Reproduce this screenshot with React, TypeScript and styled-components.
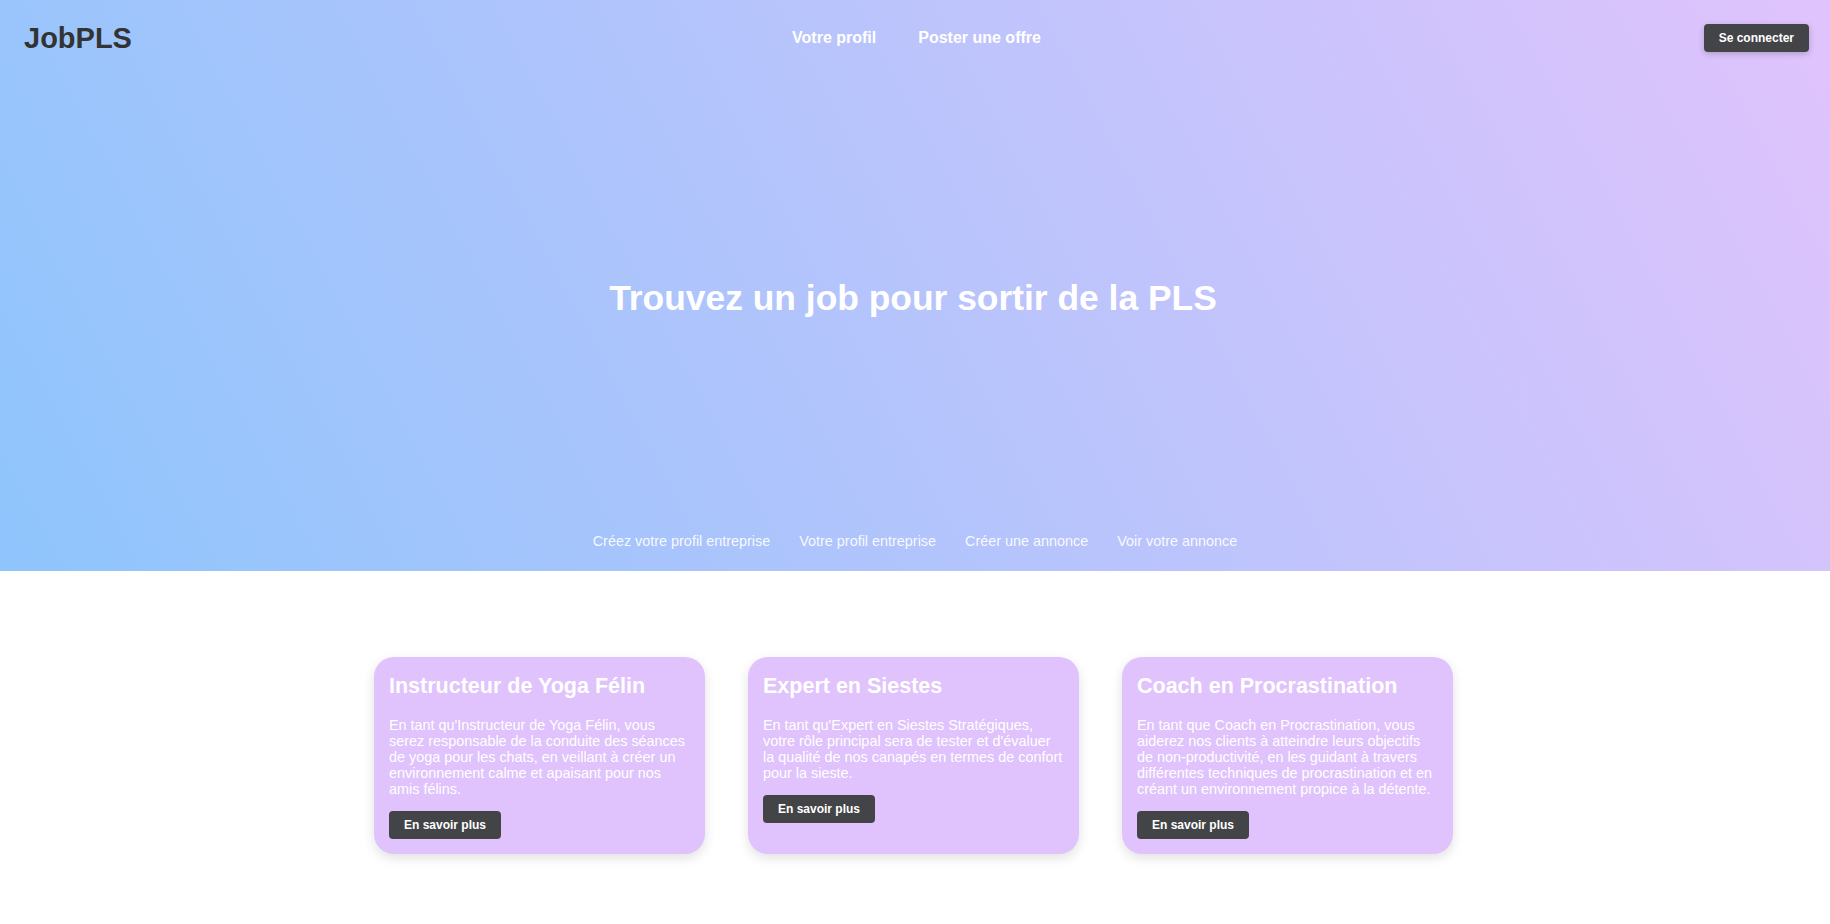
import React from "react";
import styled, { createGlobalStyle } from "styled-components";

const GlobalStyle = createGlobalStyle`
  html, body { margin: 0; padding: 0; background: #ffffff; }
  body { font-family: "Liberation Sans", Arial, sans-serif; }
  * { box-sizing: border-box; }
`;

const Hero = styled.section`
  height: 571px;
  display: flex;
  flex-direction: column;
  background-image: linear-gradient(62deg, #8ec5fc 0%, #e0c3fc 100%);
`;

const Header = styled.header`
  height: 76px;
  display: grid;
  grid-template-columns: 1fr auto 1fr;
  align-items: center;
  padding: 0 21px 0 24px;
`;

const Logo = styled.div`
  font-size: 29px;
  font-weight: 700;
  color: #333333;
  justify-self: start;
`;

const Nav = styled.nav`
  display: flex;
  gap: 42px;
`;

const NavLink = styled.a`
  color: #ffffff;
  font-size: 16px;
  font-weight: 700;
  text-decoration: none;
`;

const Button = styled.button<{ $shadow?: boolean }>`
  font-family: "Liberation Sans", Arial, sans-serif;
  font-size: 12px;
  line-height: 14px;
  font-weight: 700;
  color: #ffffff;
  background: #434447;
  border: none;
  border-radius: 4px;
  padding: 7px 15px;
  cursor: pointer;
  box-shadow: ${(p) => (p.$shadow ? "0 2px 6px rgba(0,0,0,0.2)" : "none")};
`;

const HeaderActions = styled.div`
  justify-self: end;
`;

const HeroMain = styled.div`
  flex: 1;
  display: flex;
  align-items: center;
  justify-content: center;
  padding: 0 4px 13px 0;
`;

const HeroTitle = styled.h1`
  margin: 0;
  font-size: 35.4px;
  font-weight: 700;
  color: #ffffff;
`;

const SubNav = styled.nav`
  display: flex;
  justify-content: center;
  gap: 29px;
  padding-bottom: 22px;
`;

const SubLink = styled.a`
  font-size: 14.4px;
  color: rgba(255, 255, 255, 0.92);
  text-decoration: none;
`;

const Offers = styled.section`
  padding: 86px 3px 70px 0;
  display: grid;
  grid-template-columns: repeat(3, 331px);
  column-gap: 43px;
  justify-content: center;
`;

const Card = styled.article`
  background: #e0c3fc;
  border-radius: 20px;
  padding: 17px 15px 15px;
  box-shadow: 0 4px 12px rgba(0, 0, 0, 0.12);
  display: flex;
  flex-direction: column;
  align-items: flex-start;
`;

const CardTitle = styled.h2`
  margin: 0 0 18px;
  font-size: 21.5px;
  font-weight: 700;
  color: #ffffff;
`;

const CardText = styled.p`
  margin: 0 0 14px;
  font-size: 14.4px;
  color: #ffffff;
`;

const offers = [
  {
    title: "Instructeur de Yoga Félin",
    text: "En tant qu'Instructeur de Yoga Félin, vous serez responsable de la conduite des séances de yoga pour les chats, en veillant à créer un environnement calme et apaisant pour nos amis félins.",
  },
  {
    title: "Expert en Siestes",
    text: "En tant qu'Expert en Siestes Stratégiques, votre rôle principal sera de tester et d'évaluer la qualité de nos canapés en termes de confort pour la sieste.",
  },
  {
    title: "Coach en Procrastination",
    text: "En tant que Coach en Procrastination, vous aiderez nos clients à atteindre leurs objectifs de non-productivité, en les guidant à travers différentes techniques de procrastination et en créant un environnement propice à la détente.",
  },
];

export default function App() {
  return (
    <>
      <GlobalStyle />
      <Hero>
        <Header>
          <Logo>JobPLS</Logo>
          <Nav>
            <NavLink href="#">Votre profil</NavLink>
            <NavLink href="#">Poster une offre</NavLink>
          </Nav>
          <HeaderActions>
            <Button $shadow>Se connecter</Button>
          </HeaderActions>
        </Header>
        <HeroMain>
          <HeroTitle>Trouvez un job pour sortir de la PLS</HeroTitle>
        </HeroMain>
        <SubNav>
          <SubLink href="#">Créez votre profil entreprise</SubLink>
          <SubLink href="#">Votre profil entreprise</SubLink>
          <SubLink href="#">Créer une annonce</SubLink>
          <SubLink href="#">Voir votre annonce</SubLink>
        </SubNav>
      </Hero>
      <Offers>
        {offers.map((o) => (
          <Card key={o.title}>
            <CardTitle>{o.title}</CardTitle>
            <CardText>{o.text}</CardText>
            <Button>En savoir plus</Button>
          </Card>
        ))}
      </Offers>
    </>
  );
}
